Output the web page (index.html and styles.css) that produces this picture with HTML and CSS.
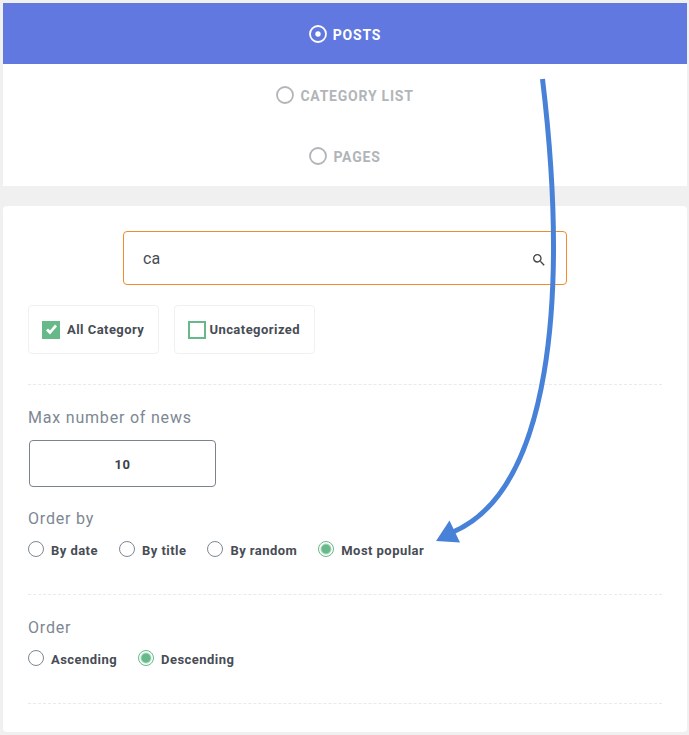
FILE: index.html
```html
<!DOCTYPE html>
<html lang="en">
<head>
<meta charset="utf-8">
<meta name="viewport" content="width=device-width, initial-scale=1">
<title>Posts</title>
<link rel="stylesheet" href="styles.css">
</head>
<body>
<nav class="tabs">
  <button type="button" class="tab tab-active">
    <svg class="tab-icon" viewBox="0 0 18 18" aria-hidden="true"><circle cx="9" cy="9" r="8"/><circle class="tab-dot" cx="9" cy="9" r="2.7"/></svg>
    <span>POSTS</span>
  </button>
  <button type="button" class="tab">
    <svg class="tab-icon" viewBox="0 0 18 18" aria-hidden="true"><circle cx="9" cy="9" r="8"/></svg>
    <span>CATEGORY LIST</span>
  </button>
  <button type="button" class="tab">
    <svg class="tab-icon" viewBox="0 0 18 18" aria-hidden="true"><circle cx="9" cy="9" r="8"/></svg>
    <span>PAGES</span>
  </button>
</nav>

<main class="panel">
  <div class="search">
    <input class="search-input" type="text" value="ca" aria-label="Search categories">
    <svg class="search-icon" viewBox="0 0 24 24" aria-hidden="true"><path d="M15.500 14h-.79l-.28-.27A6.471 6.471 0 0 0 16 9.500 6.500 6.500 0 1 0 9.500 16c1.610 0 3.090-.59 4.230-1.570l.27.28v.79l5 4.990L20.490 19l-4.990-5zm-6 0C7.010 14 5 11.990 5 9.500S7.010 5 9.500 5 14 7.010 14 9.500 11.990 14 9.500 14z"/></svg>
  </div>

  <div class="categories">
    <label class="category category-all"><input type="checkbox" class="check" checked><span>All Category</span></label>
    <label class="category"><input type="checkbox" class="check"><span>Uncategorized</span></label>
  </div>

  <section class="section">
    <label class="title" for="max-news">Max number of news</label>
    <input class="number" id="max-news" type="text" inputmode="numeric" value="10">
    <h2 class="title" id="order-by">Order by</h2>
    <div class="options" role="radiogroup" aria-labelledby="order-by">
      <label class="option"><input type="radio" class="radio" name="orderby"><span>By date</span></label>
      <label class="option"><input type="radio" class="radio" name="orderby"><span>By title</span></label>
      <label class="option"><input type="radio" class="radio" name="orderby"><span>By random</span></label>
      <label class="option"><input type="radio" class="radio" name="orderby" checked><span>Most popular</span></label>
    </div>
  </section>

  <section class="section">
    <h2 class="title" id="order">Order</h2>
    <div class="options" role="radiogroup" aria-labelledby="order">
      <label class="option"><input type="radio" class="radio" name="order"><span>Ascending</span></label>
      <label class="option"><input type="radio" class="radio" name="order" checked><span>Descending</span></label>
    </div>
  </section>
</main>

<svg class="arrow" width="140" height="480" viewBox="430 70 140 480" aria-hidden="true">
  <path class="arrow-line" d="M542.500 79C569 300 550 490 453 532"/>
  <path class="arrow-head" d="M436 541L449.500 520.500L460 542.500Z"/>
</svg>
</body>
</html>
```

FILE: styles.css
```css
* {
  box-sizing: border-box;
}

body {
  margin: 0;
  padding: 3px 2px 3px 3px;
  position: relative;
  background: #f0f0f0;
  color: #474c55;
  font-family: Roboto, "Liberation Sans", sans-serif;
}

.tabs {
  display: flex;
  flex-direction: column;
  margin-bottom: 20px;
  background: #fff;
}

.tab {
  display: flex;
  align-items: center;
  justify-content: center;
  gap: 6px;
  padding: 20px;
  border: 0;
  background: none;
  color: #b2b5b8;
  font: 700 14px/21px Roboto, "Liberation Sans", sans-serif;
  letter-spacing: 0.055em;
}

.tab span {
  padding-top: 3px;
  line-height: 18px;
}

.tab-active {
  background: #6078e0;
  color: #fff;
}

.tab-icon {
  width: 18px;
  height: 18px;
  fill: none;
  stroke: currentColor;
  stroke-width: 1.8;
}

.tab-dot {
  fill: currentColor;
  stroke: none;
}

.panel {
  padding: 25px 25px 28px;
  border-radius: 4px;
  background: #fff;
}

.search {
  display: flex;
  align-items: center;
  width: 70%;
  height: 54px;
  margin: 0 auto 20px;
  padding: 0 19px;
  border: 1px solid #f28c28;
  border-radius: 4px;
}

.search-input {
  flex: 1;
  min-width: 0;
  padding: 2px 0 0;
  border: 0;
  outline: 0;
  background: none;
  color: #474c55;
  font: 400 16px/24px Roboto, "Liberation Sans", sans-serif;
}

.search-icon {
  width: 16px;
  height: 16px;
  margin-top: 3px;
  fill: #444;
}

.categories {
  display: flex;
  gap: 15px;
  padding-bottom: 30px;
  border-bottom: 1px dashed #eaeaea;
}

.category {
  display: flex;
  align-items: center;
  gap: 3px;
  height: 49px;
  padding: 0 14px 0 13px;
  border: 1px solid #f0f0f5;
  border-radius: 4px;
  font-size: 13px;
  font-weight: 700;
  letter-spacing: 0.035em;
}

.category-all {
  gap: 7px;
}

.check {
  appearance: none;
  width: 18px;
  height: 18px;
  margin: 0;
  border: 2px solid #67b98a;
}

.check:checked {
  background: #67b98a;
}

.check:checked::before {
  content: "";
  display: block;
  width: 14px;
  height: 14px;
  background: #fff;
  clip-path: polygon(2px 8px, 4px 6px, 6px 8px, 11px 2px, 13px 4px, 6px 12px);
}

.section {
  padding: 20px 0 37px;
  border-bottom: 1px dashed #eaeaea;
}

.title {
  display: block;
  margin: 0 0 10px;
  padding-top: 1px;
  color: #7d8793;
  font-size: 16px;
  font-weight: 400;
  line-height: 24px;
  letter-spacing: 0.05em;
}

.number {
  display: block;
  width: 187px;
  height: 47px;
  margin: 0 0 19px 1px;
  padding: 2px 0 0;
  border: 1px solid #7a8490;
  border-radius: 4px;
  background: #fff;
  color: #3c4148;
  font: 700 13px/20px Roboto, "Liberation Sans", sans-serif;
  letter-spacing: 0.035em;
  text-align: center;
}

.options {
  display: flex;
  flex-wrap: wrap;
  gap: 21px;
}

.option {
  display: flex;
  align-items: center;
  gap: 7px;
  font-size: 13px;
  font-weight: 700;
  line-height: 16px;
  letter-spacing: 0.035em;
}

.option span {
  padding-top: 4px;
  line-height: 12px;
}

.radio {
  appearance: none;
  width: 16px;
  height: 16px;
  margin: 0;
  border: 1px solid #7d8793;
  border-radius: 50%;
}

.radio:checked {
  border-color: #67b98a;
  background: radial-gradient(circle, #67b98a 4px, #fff 6px);
}

.arrow {
  position: absolute;
  top: 70px;
  left: 430px;
  pointer-events: none;
}

.arrow-line {
  fill: none;
  stroke: #4881d8;
  stroke-width: 5;
}

.arrow-head {
  fill: #4881d8;
}
```
